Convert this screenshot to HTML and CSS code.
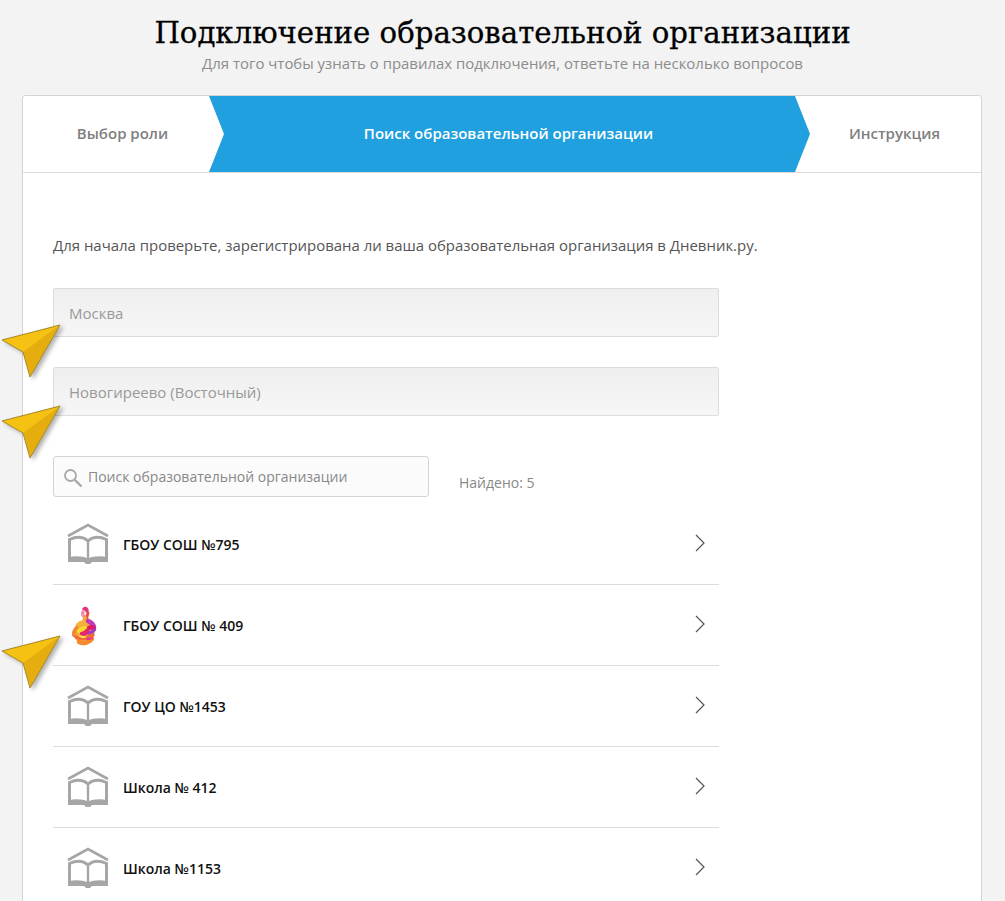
FILE: index.html
```html
<!DOCTYPE html>
<html lang="ru">
<head>
<meta charset="utf-8">
<title>Подключение образовательной организации</title>
<link rel="stylesheet" href="styles.css">
</head>
<body>
<svg class="defs" width="0" height="0" aria-hidden="true">
  <defs>
    <symbol id="school" viewBox="0 0 42 42">
      <g fill="none" stroke="#a6a6a6" stroke-width="3">
        <path d="M1 13 21 2l20 11" stroke-width="2.6"/>
        <path d="M2.500 36V16.500C9 13.500 16 13.500 21 18c5-4.500 12-4.500 18.500-1.500V36"/>
        <path d="M21 18v18" stroke-width="2.400"/>
      </g>
      <path d="M1 34.500c7-2 15-1.500 20 1 5-2.500 13-3 20-1V39H25l-2 2h-4l-2-2H1z" fill="#a6a6a6"/>
    </symbol>
    <symbol id="chev" viewBox="0 0 12 18">
      <path d="M2 1 10 9 2 17" fill="none" stroke="#555" stroke-width="1.200"/>
    </symbol>
    <symbol id="pointer" viewBox="0 0 68 58">
      <path d="M60 1 30 53 23 28 2 16z" fill="#e5ad0e"/>
      <path d="M60 1 2 16 23 28z" fill="#f5c213"/>
      <path d="M60 1 30 53 23 28 2 16z" fill="none" stroke="#a68b2e" stroke-width="1"/>
    </symbol>
  </defs>
</svg>

<header class="head">
  <h1 class="title">Подключение образовательной организации</h1>
  <p class="subtitle">Для того чтобы узнать о правилах подключения, ответьте на несколько вопросов</p>
</header>

<main class="card">
  <nav class="steps">
    <div class="step step-first">Выбор роли</div>
    <div class="step step-active">Поиск образовательной организации</div>
    <div class="step step-last">Инструкция</div>
  </nav>

  <section class="body">
    <p class="intro">Для начала проверьте, зарегистрирована ли ваша образовательная организация в Дневник.ру.</p>

    <div class="field">Москва</div>
    <div class="field">Новогиреево (Восточный)</div>

    <div class="search-row">
      <div class="search">
        <svg class="search-icon" viewBox="0 0 20 20" aria-hidden="true">
          <circle cx="7.500" cy="7.500" r="5.500" fill="none" stroke="#a8a8a8" stroke-width="1.800"/>
          <path d="M11.800 11.800 18.500 18.500" stroke="#a8a8a8" stroke-width="2.400"/>
        </svg>
        <span>Поиск образовательной организации</span>
      </div>
      <span class="found">Найдено: 5</span>
    </div>

    <ul class="list">
      <li class="row">
        <svg class="row-icon"><use href="#school"/></svg>
        <span class="row-name">ГБОУ СОШ №795</span>
        <svg class="row-chev"><use href="#chev"/></svg>
      </li>
      <li class="row">
        <svg class="row-icon" viewBox="0 0 42 42" fill="none" stroke-linecap="round">
          <circle cx="17" cy="29" r="10.500" fill="#f6a63a"/>
          <path d="M17 5c2-1 3 0 3 2" stroke="#e2337c" stroke-width="3.500"/>
          <path d="M16 8c-1 2 0 4 2 5" stroke="#f08fb0" stroke-width="3.500"/>
          <path d="M21 9c-1 3-2 5-1 8" stroke="#e8503a" stroke-width="3"/>
          <path d="M18 14c-1 2-1 3 0 5" stroke="#f6a63a" stroke-width="4"/>
          <path d="M10 24c1-4 5-6 8-5" stroke="#f8b03c" stroke-width="5"/>
          <path d="M7 31c-1-3 1-5 3-7" stroke="#f0883c" stroke-width="4"/>
          <path d="M12 27c2-2 4-3 6-3" stroke="#f6d92e" stroke-width="4.500"/>
          <path d="M21 17c3 1 5 3 6 6" stroke="#c13ab5" stroke-width="4.500"/>
          <path d="M22 24c2-1 4-1 5 1" stroke="#d81e6b" stroke-width="4.500"/>
          <path d="M21 29c3 0 5-1 6-3" stroke="#9c3cc8" stroke-width="3.500"/>
          <path d="M15 30c2 0 4-1 5-3" stroke="#e5266a" stroke-width="4.500"/>
          <path d="M9 33c4 2 10 2 17-2" stroke="#f26a3a" stroke-width="3.500"/>
          <path d="M12 38c4 2 10 1 13-3" stroke="#f78a2e" stroke-width="4.500"/>
          <path d="M20 35c2 0 4 0 5-1" stroke="#e23a8a" stroke-width="2"/>
          <path d="M13 32c1 1 3 1 5 1" stroke="#fbe24a" stroke-width="2"/>
        </svg>
        <span class="row-name">ГБОУ СОШ № 409</span>
        <svg class="row-chev"><use href="#chev"/></svg>
      </li>
      <li class="row">
        <svg class="row-icon"><use href="#school"/></svg>
        <span class="row-name">ГОУ ЦО №1453</span>
        <svg class="row-chev"><use href="#chev"/></svg>
      </li>
      <li class="row">
        <svg class="row-icon"><use href="#school"/></svg>
        <span class="row-name">Школа № 412</span>
        <svg class="row-chev"><use href="#chev"/></svg>
      </li>
      <li class="row">
        <svg class="row-icon"><use href="#school"/></svg>
        <span class="row-name">Школа №1153</span>
        <svg class="row-chev"><use href="#chev"/></svg>
      </li>
    </ul>
  </section>
</main>

<svg class="pointer pointer-a"><use href="#pointer"/></svg>
<svg class="pointer pointer-b"><use href="#pointer"/></svg>
<svg class="pointer pointer-c"><use href="#pointer"/></svg>
</body>
</html>
```
FILE: styles.css
```css
* { box-sizing: border-box; }
html, body { margin: 0; height: 901px; overflow: hidden; }
body {
  position: relative;
  background: #f3f3f3;
  font-family: "Open Sans", "Noto Sans", sans-serif;
  color: #333;
}
.defs { position: absolute; }

.head { height: 95px; padding-top: 13px; text-align: center; }
.title {
  margin: 0;
  font-family: "DejaVu Serif", serif;
  font-size: 29.200px;
  line-height: 40px;
  font-weight: 400;
  color: #000;
  -webkit-text-stroke: .3px #000;
}
.subtitle {
  margin: 0;
  font-size: 14.950px;
  line-height: 20px;
  color: #8c8c8c;
}

.card {
  margin: 0 23px 0 22px;
  height: 830px;
  background: #fff;
  border: 1px solid #d4d4d4;
  border-radius: 3px 3px 0 0;
}
.steps { display: flex; height: 77px; border-bottom: 1px solid #dcdcdc; }
.step {
  display: flex;
  align-items: center;
  justify-content: center;
  padding: 0 2px 2px 0;
  font-size: 15px;
  font-weight: 600;
  color: #7f7f7f;
}
.step-first { flex: 0 0 201px; }
.step-active {
  flex: 0 0 601px;
  margin-left: -15px;
  background: #20a0de;
  color: #fff;
  clip-path: polygon(0 0, 586px 0, 601px 50%, 586px 100%, 0 100%, 15px 50%);
}
.step-last { flex: 1; }

.body { padding: 62px 30px 0; }
.intro { margin: 0 0 33px; font-size: 14.950px; line-height: 20px; color: #555; }
.field {
  display: flex;
  align-items: center;
  width: 666px;
  height: 49px;
  margin-bottom: 30px;
  padding-left: 15px;
  background: linear-gradient(#efefef, #f6f6f6);
  border: 1px solid #dcdcdc;
  border-radius: 2px;
  font-size: 15px;
  color: #999;
}
.search-row { display: flex; align-items: center; margin-top: 40px; }
.search {
  display: flex;
  align-items: center;
  width: 376px;
  height: 41px;
  padding-left: 9px;
  background: #fbfbfb;
  border: 1px solid #d4d4d4;
  border-radius: 3px;
  font-size: 14px;
  color: #888;
}
.search-icon { width: 20px; height: 20px; margin: 3px 5px 0 0; }
.found { margin: 12px 0 0 30px; font-size: 14px; color: #888; }

.list { list-style: none; margin: 7px 0 0; padding: 0; width: 666px; }
.row {
  display: flex;
  align-items: center;
  height: 81px;
  padding: 0 13px 0 14px;
  border-bottom: 1px solid #dcdcdc;
}
.row-icon { flex: none; width: 42px; height: 42px; margin-right: 14px; }
.row-name { flex: 1; font-size: 14px; font-weight: 600; color: #111; }
.row-chev { flex: none; width: 12px; height: 18px; margin-bottom: 2px; }

.pointer {
  position: absolute;
  left: 0;
  width: 68px;
  height: 58px;
  filter: drop-shadow(3px 2px 2px rgba(0, 0, 0, .3));
}
.pointer-a { top: 324px; }
.pointer-b { top: 405px; }
.pointer-c { top: 635px; }
```
